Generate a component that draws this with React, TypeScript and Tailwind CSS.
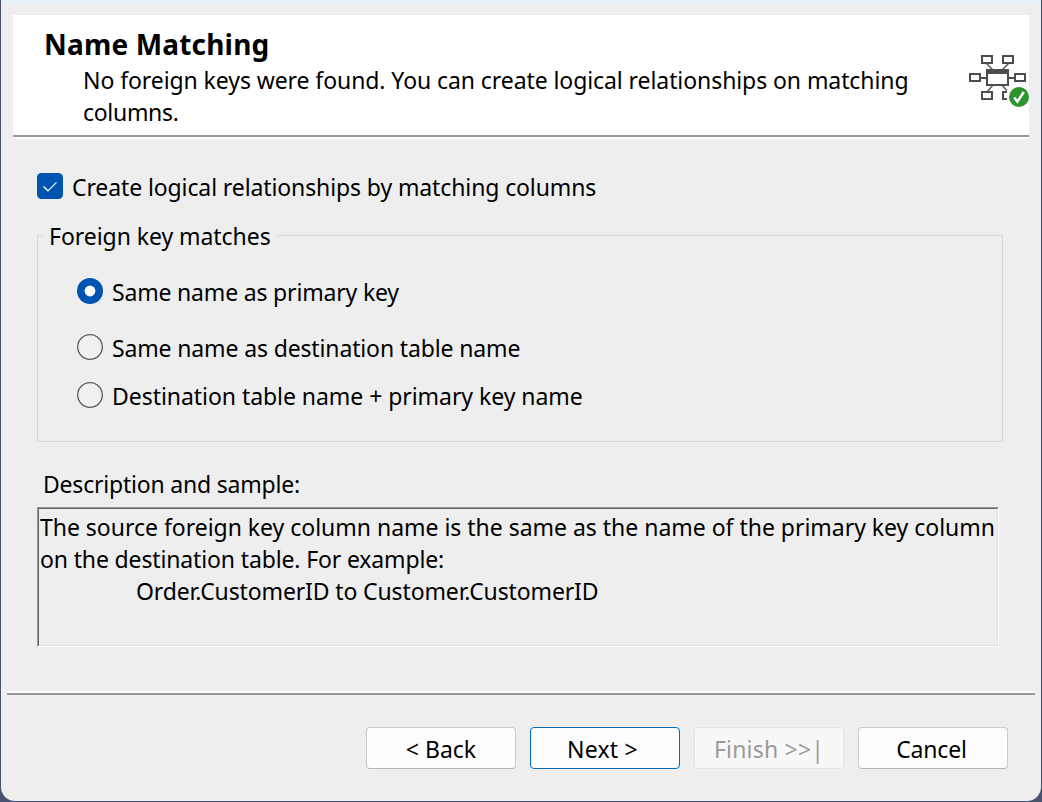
import type { ReactNode } from "react";

function DiagramIcon() {
  const boxes = [
    [12, 0],
    [33, 0],
    [0, 18],
    [45, 18],
    [12, 36],
    [33, 36],
  ];
  return (
    <svg width="60" height="53" viewBox="0 0 60 53" className="block shrink-0">
      <path
        d="M17.500 8.500l6.500 6.500M39.500 8.500l-6.500 6.500M18 37l6-7M39 37l-6-7"
        stroke="#5a5a5c"
        strokeWidth="1.500"
        fill="none"
      />
      <path d="M11 23h8M38 23h8" stroke="#4d4d50" strokeWidth="2" />
      {boxes.map(([x, y]) => (
        <rect
          key={`${x}-${y}`}
          x={x + 1}
          y={y + 1}
          width="10"
          height="7"
          fill="#fff"
          stroke="#4d4d50"
          strokeWidth="2"
        />
      ))}
      <rect x="18" y="15" width="21" height="15" fill="#fff" stroke="#4d4d50" strokeWidth="2" />
      <rect x="17" y="14" width="23" height="5" fill="#4d4d50" />
      <path d="M38 34h22v19H38z" fill="#fff" />
      <circle cx="50" cy="42" r="10" fill="#2d942d" />
      <path d="M45.200 42.500l3.200 4.200L54.800 37" fill="none" stroke="#fff" strokeWidth="2.500" />
    </svg>
  );
}

function Radio({ checked, children, className }: { checked?: boolean; children: ReactNode; className: string }) {
  return (
    <div className={`flex items-center ${className}`}>
      <svg width="26" height="26" viewBox="0 0 26 26" className="mr-[9px] block shrink-0">
        {checked ? (
          <>
            <circle cx="13" cy="13" r="13" fill="#0054b1" />
            <circle cx="13" cy="13" r="5.400" fill="#fff" />
          </>
        ) : (
          <circle cx="13" cy="13" r="12.300" fill="#f1f1f1" stroke="#5c5c5c" strokeWidth="1.300" />
        )}
      </svg>
      <span className="pt-px">{children}</span>
    </div>
  );
}

const button =
  "flex h-[42px] w-[150px] items-center justify-center rounded-[4px] border pt-[2px] whitespace-pre";

export default function App() {
  return (
    <div className="h-[802px] w-[1042px] overflow-hidden bg-[#4a5272] px-px pb-px font-['Noto_Sans',sans-serif] text-[23px] leading-8 text-black">
      <div className="flex h-[801px] flex-col overflow-hidden rounded-b-[14px] bg-[#eeeeee]">
        <div className="h-[3px] shrink-0 bg-[#e9f0f7]" />
        <header className="mt-3 mr-3 ml-3 flex h-[120px] shrink-0 justify-between bg-white">
          <div className="w-[890px] pt-[13px] pl-[31px]">
            <h1 className="text-[28px] leading-8 font-bold tracking-[0.18px] whitespace-nowrap">Name Matching</h1>
            <p className="mt-[4px] ml-[39px] whitespace-nowrap">
              <span className="tracking-[-0.08px]">
                No foreign keys were found. You can create logical relationships on matching
              </span>
              <br />
              <span className="tracking-[-0.3px]">columns.</span>
            </p>
          </div>
          <div className="pt-10">
            <DiagramIcon />
          </div>
        </header>
        <div className="mr-3 ml-3 h-[4px] shrink-0 border-t-2 border-b-2 border-t-[#979797] border-b-white" />

        <main className="flex h-[552px] shrink-0 flex-col pl-9 whitespace-nowrap">
          <label className="mt-[34px] flex h-[26px] items-center tracking-[-0.11px]">
            <svg width="26" height="26" viewBox="0 0 26 26" className="mr-[9px] block">
              <rect width="26" height="26" rx="4.500" fill="#0054b1" />
              <path d="M6.500 13.500l4.500 4.300L19.500 9.300" fill="none" stroke="#fff" strokeWidth="1.200" />
            </svg>
            <span className="pt-px">Create logical relationships by matching columns</span>
          </label>

          <fieldset className="mt-[20px] h-[223px] w-[966px] shrink-0 border border-[#d6d6d6]">
            <legend className="ml-[5px] h-8 pr-[6px] pl-[6px] tracking-[-0.05px]">
              <span className="relative top-px">Foreign key matches</span>
            </legend>
            <div className="pl-[39px]">
              <Radio checked className="mt-[27px] h-[26px] tracking-[-0.18px]">
                Same name as primary key
              </Radio>
              <Radio className="mt-[30px] h-[26px] tracking-[-0.14px]">Same name as destination table name</Radio>
              <Radio className="mt-[22px] h-[26px] tracking-[-0.05px]">Destination table name + primary key name</Radio>
            </div>
          </fieldset>

          <div className="mt-[26px] ml-[6px] h-8 tracking-[-0.2px]">Description and sample:</div>
          <div className="mt-[7px] h-[140px] w-[962px] border border-t-[#979797] border-r-white border-b-white border-l-[#979797]">
            <div className="h-full border border-t-[#646464] border-r-[#e0e0e0] border-b-[#e0e0e0] border-l-[#646464] pt-[2px] pl-px">
              <p className="tracking-[-0.02px]">
                The source foreign key column name is the same as the name of the primary key column
              </p>
              <p className="tracking-[-0.14px]">on the destination table. For example:</p>
              <p className="ml-24 tracking-[-0.13px]">Order.CustomerID to Customer.CustomerID</p>
            </div>
          </div>
        </main>

        <div className="mr-[6px] ml-[6px] h-[4px] shrink-0 border-t-2 border-b-2 border-t-white border-b-[#979797]" />
        <footer className="mt-8 flex justify-end gap-[14px] pr-[33px]">
          <button className={`${button} border-[#cacaca] border-b-[#b5b5b5] bg-[#fdfdfd]`}>&lt; Back</button>
          <button className={`${button} border-[#006abe] bg-[#fdfdfd] pr-[5px] tracking-[0.2px]`}>Next &gt;</button>
          <button className={`${button} border-[#e2e2e2] bg-[#f8f8f8] tracking-[0.2px] text-[#9a9a9a]`}>
            Finish &gt;&gt;|
          </button>
          <button className={`${button} border-[#cacaca] border-b-[#b5b5b5] bg-[#fdfdfd] pr-[3px] tracking-[-0.15px]`}>
            Cancel
          </button>
        </footer>
      </div>
    </div>
  );
}
